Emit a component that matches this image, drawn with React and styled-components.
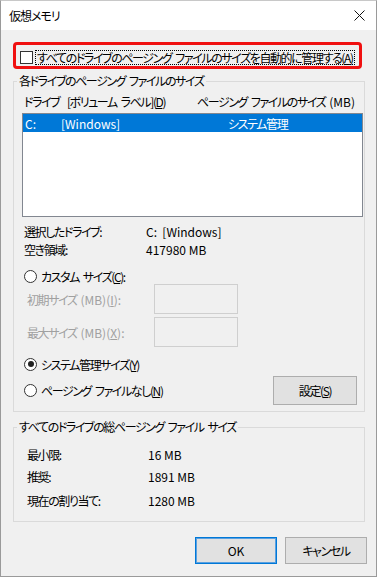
import React from 'react';
import styled, { createGlobalStyle } from 'styled-components';

// --- global ---

const GlobalStyle = createGlobalStyle`
  * { box-sizing: border-box; }
  html, body { margin: 0; padding: 0; background: #ffffff; }
  body {
    font-family: "Noto Sans CJK JP", "Noto Sans", sans-serif;
    font-size: 12px;
    font-feature-settings: "palt";
    letter-spacing: -1.4px;
    word-spacing: 2.5px;
    color: #000;
  }
`;

// Latin runs (drive letters, sizes) keep normal tracking
const Latin = styled.span`
  letter-spacing: 0;
  word-spacing: 0;
`;

// --- window frame ---

const Window = styled.div`
  width: 377px;
  height: 577px;
  border: 1px solid #9a9a9a;
  border-top-color: #c8c8c8;
  display: flex;
  flex-direction: column;
  background: #f0f0f0;
`;

const TitleBar = styled.div`
  height: 29px;
  background: #ffffff;
  display: flex;
  align-items: center;
  justify-content: space-between;
  padding: 0 11px 0 8px;
  letter-spacing: -1px;
`;

const Body = styled.div`
  flex: 1;
  display: flex;
  flex-direction: column;
  padding: 0 11px 0 12px;
`;

// --- annotated checkbox row ---

const Highlight = styled.div`
  margin-top: 12px;
  width: 349px;
  height: 27px;
  border: 3px solid #f01010;
  border-radius: 4px;
  padding: 4px 0 0 4px;
  display: flex;
  align-items: center;
`;

const CheckBox = styled.span`
  width: 13px;
  height: 13px;
  border: 1px solid #333;
  background: #fff;
  flex: none;
`;

const FocusLabel = styled.span`
  margin-left: 2px;
  padding: 0 1px;
  line-height: 13px;
  border: 1px dotted #000;
  white-space: nowrap;
`;

// --- group boxes ---

const Group = styled.fieldset`
  margin: ${p => p.$top}px 0 0 0;
  padding: 0;
  min-width: 0;
  border: 1px solid #dadada;
`;

const Legend = styled.legend`
  margin-left: 3px;
  padding: 0 2px;
  line-height: 16px;
`;

const GroupInner = styled.div`
  padding: ${p => p.$pad};
  display: flex;
  flex-direction: column;
`;

const ColumnHeader = styled.div`
  display: grid;
  grid-template-columns: 173px 1fr;
  padding-left: 2px;
  line-height: 16px;
  white-space: nowrap;
`;

const ListBox = styled.div`
  margin-top: 3px;
  width: 341px;
  height: 104px;
  border: 1px solid #828790;
  background: #fff;
`;

const ListRow = styled.div`
  display: grid;
  grid-template-columns: 36px 167px 1fr;
  height: 18px;
  align-items: center;
  padding-left: 2px;
  background: ${p => (p.$selected ? '#0078d7' : 'transparent')};
  color: ${p => (p.$selected ? '#fff' : '#000')};
  white-space: nowrap;
`;

const InfoGrid = styled.div`
  display: grid;
  grid-template-columns: ${p => p.$label}px 1fr;
  grid-template-rows: ${p => p.$rows};
  align-items: center;
  margin-top: ${p => p.$top}px;
  padding-left: ${p => p.$left}px;
  white-space: nowrap;
`;

const RadioRow = styled.div`
  display: flex;
  align-items: center;
  justify-content: space-between;
  height: ${p => p.$h || 16}px;
  margin-top: ${p => p.$top}px;
  padding-left: 2px;
`;

const RadioLabel = styled.label`
  display: flex;
  align-items: center;
  gap: 4px;
  white-space: nowrap;
`;

const Radio = styled.span`
  width: 13px;
  height: 13px;
  border-radius: 50%;
  border: 1px solid #333;
  background: #fff;
  display: flex;
  align-items: center;
  justify-content: center;

  &::after {
    content: '';
    width: 6px;
    height: 6px;
    border-radius: 50%;
    background: ${p => (p.$checked ? '#222' : 'transparent')};
  }
`;

const SizeRow = styled.div`
  display: grid;
  grid-template-columns: 127px 84px;
  align-items: center;
  height: 30px;
  margin-top: ${p => p.$top}px;
  padding-left: 5px;
  color: #a0a0a0;
  white-space: nowrap;
`;

const DisabledInput = styled.div`
  height: 30px;
  border: 1px solid #cfcfcf;
  background: #f0f0f0;
`;

const Button = styled.button`
  width: ${p => p.$w}px;
  height: ${p => p.$h}px;
  margin: 0;
  padding: 0;
  font: inherit;
  letter-spacing: inherit;
  color: #000;
  background: #e1e1e1;
  border: 1px solid ${p => (p.$default ? '#0078d7' : '#adadad')};
  box-shadow: ${p => (p.$default ? 'inset 0 0 0 1px #5aa0e0' : 'none')};
`;

const ButtonBar = styled.div`
  display: flex;
  justify-content: flex-end;
  gap: 8px;
  margin: 15px -2px 0 0;
`;

function CloseIcon() {
  return (
    <svg width="11" height="11" viewBox="0 0 11 11">
      <path d="M0.5 0.5 L10.5 10.5 M10.5 0.5 L0.5 10.5" stroke="#111" strokeWidth="1" fill="none" />
    </svg>
  );
}

export default function App() {
  return (
    <>
      <GlobalStyle />
      <Window>
        <TitleBar>
          <span>仮想メモリ</span>
          <CloseIcon />
        </TitleBar>

        <Body>
          <Highlight>
            <CheckBox />
            <FocusLabel>すべてのドライブのページング ファイルのサイズを自動的に管理する(<u>A</u>)</FocusLabel>
          </Highlight>

          <Group $top={4}>
            <Legend>各ドライブのページング ファイルのサイズ</Legend>
            <GroupInner $pad="5px 1px 6px 8px">
              <ColumnHeader>
                <span>ドライブ &nbsp;[ボリューム ラベル](<u>D</u>)</span>
                <span>ページング ファイルのサイズ <Latin>(MB)</Latin></span>
              </ColumnHeader>
              <ListBox>
                <ListRow $selected>
                  <Latin>C:</Latin>
                  <Latin>[Windows]</Latin>
                  <span>システム管理</span>
                </ListRow>
              </ListBox>

              <InfoGrid $label={122} $rows="18px 18px" $top={5} $left={2}>
                <span>選択したドライブ:</span>
                <Latin>C: &nbsp;[Windows]</Latin>
                <span>空き領域:</span>
                <Latin>417980 MB</Latin>
              </InfoGrid>

              <RadioRow $top={10}>
                <RadioLabel>
                  <Radio />
                  <span>カスタム サイズ(<u>C</u>):</span>
                </RadioLabel>
              </RadioRow>
              <SizeRow $top={0}>
                <span>初期サイズ <Latin>(MB)(<u>I</u>):</Latin></span>
                <DisabledInput />
              </SizeRow>
              <SizeRow $top={3}>
                <span>最大サイズ <Latin>(MB)(<u>X</u>):</Latin></span>
                <DisabledInput />
              </SizeRow>

              <RadioRow $top={9}>
                <RadioLabel>
                  <Radio $checked />
                  <span>システム管理サイズ(<u>Y</u>)</span>
                </RadioLabel>
              </RadioRow>
              <RadioRow $top={4} $h={29}>
                <RadioLabel>
                  <Radio />
                  <span>ページング ファイルなし(<u>N</u>)</span>
                </RadioLabel>
                <Button $w={84} $h={29} style={{ marginRight: 6 }}>設定(<u>S</u>)</Button>
              </RadioRow>
            </GroupInner>
          </Group>

          <Group $top={7}>
            <Legend>すべてのドライブの総ページング ファイル サイズ</Legend>
            <GroupInner $pad="9px 1px 8px 0">
              <InfoGrid $label={121} $rows="21px 22px 26px" $top={0} $left={13}>
                <span>最小限:</span>
                <Latin>16 MB</Latin>
                <span>推奨:</span>
                <Latin>1891 MB</Latin>
                <span>現在の割り当て:</span>
                <Latin>1280 MB</Latin>
              </InfoGrid>
            </GroupInner>
          </Group>

          <ButtonBar>
            <Button $w={82} $h={27} $default><Latin>OK</Latin></Button>
            <Button $w={82} $h={27}>キャンセル</Button>
          </ButtonBar>
        </Body>
      </Window>
    </>
  );
}
